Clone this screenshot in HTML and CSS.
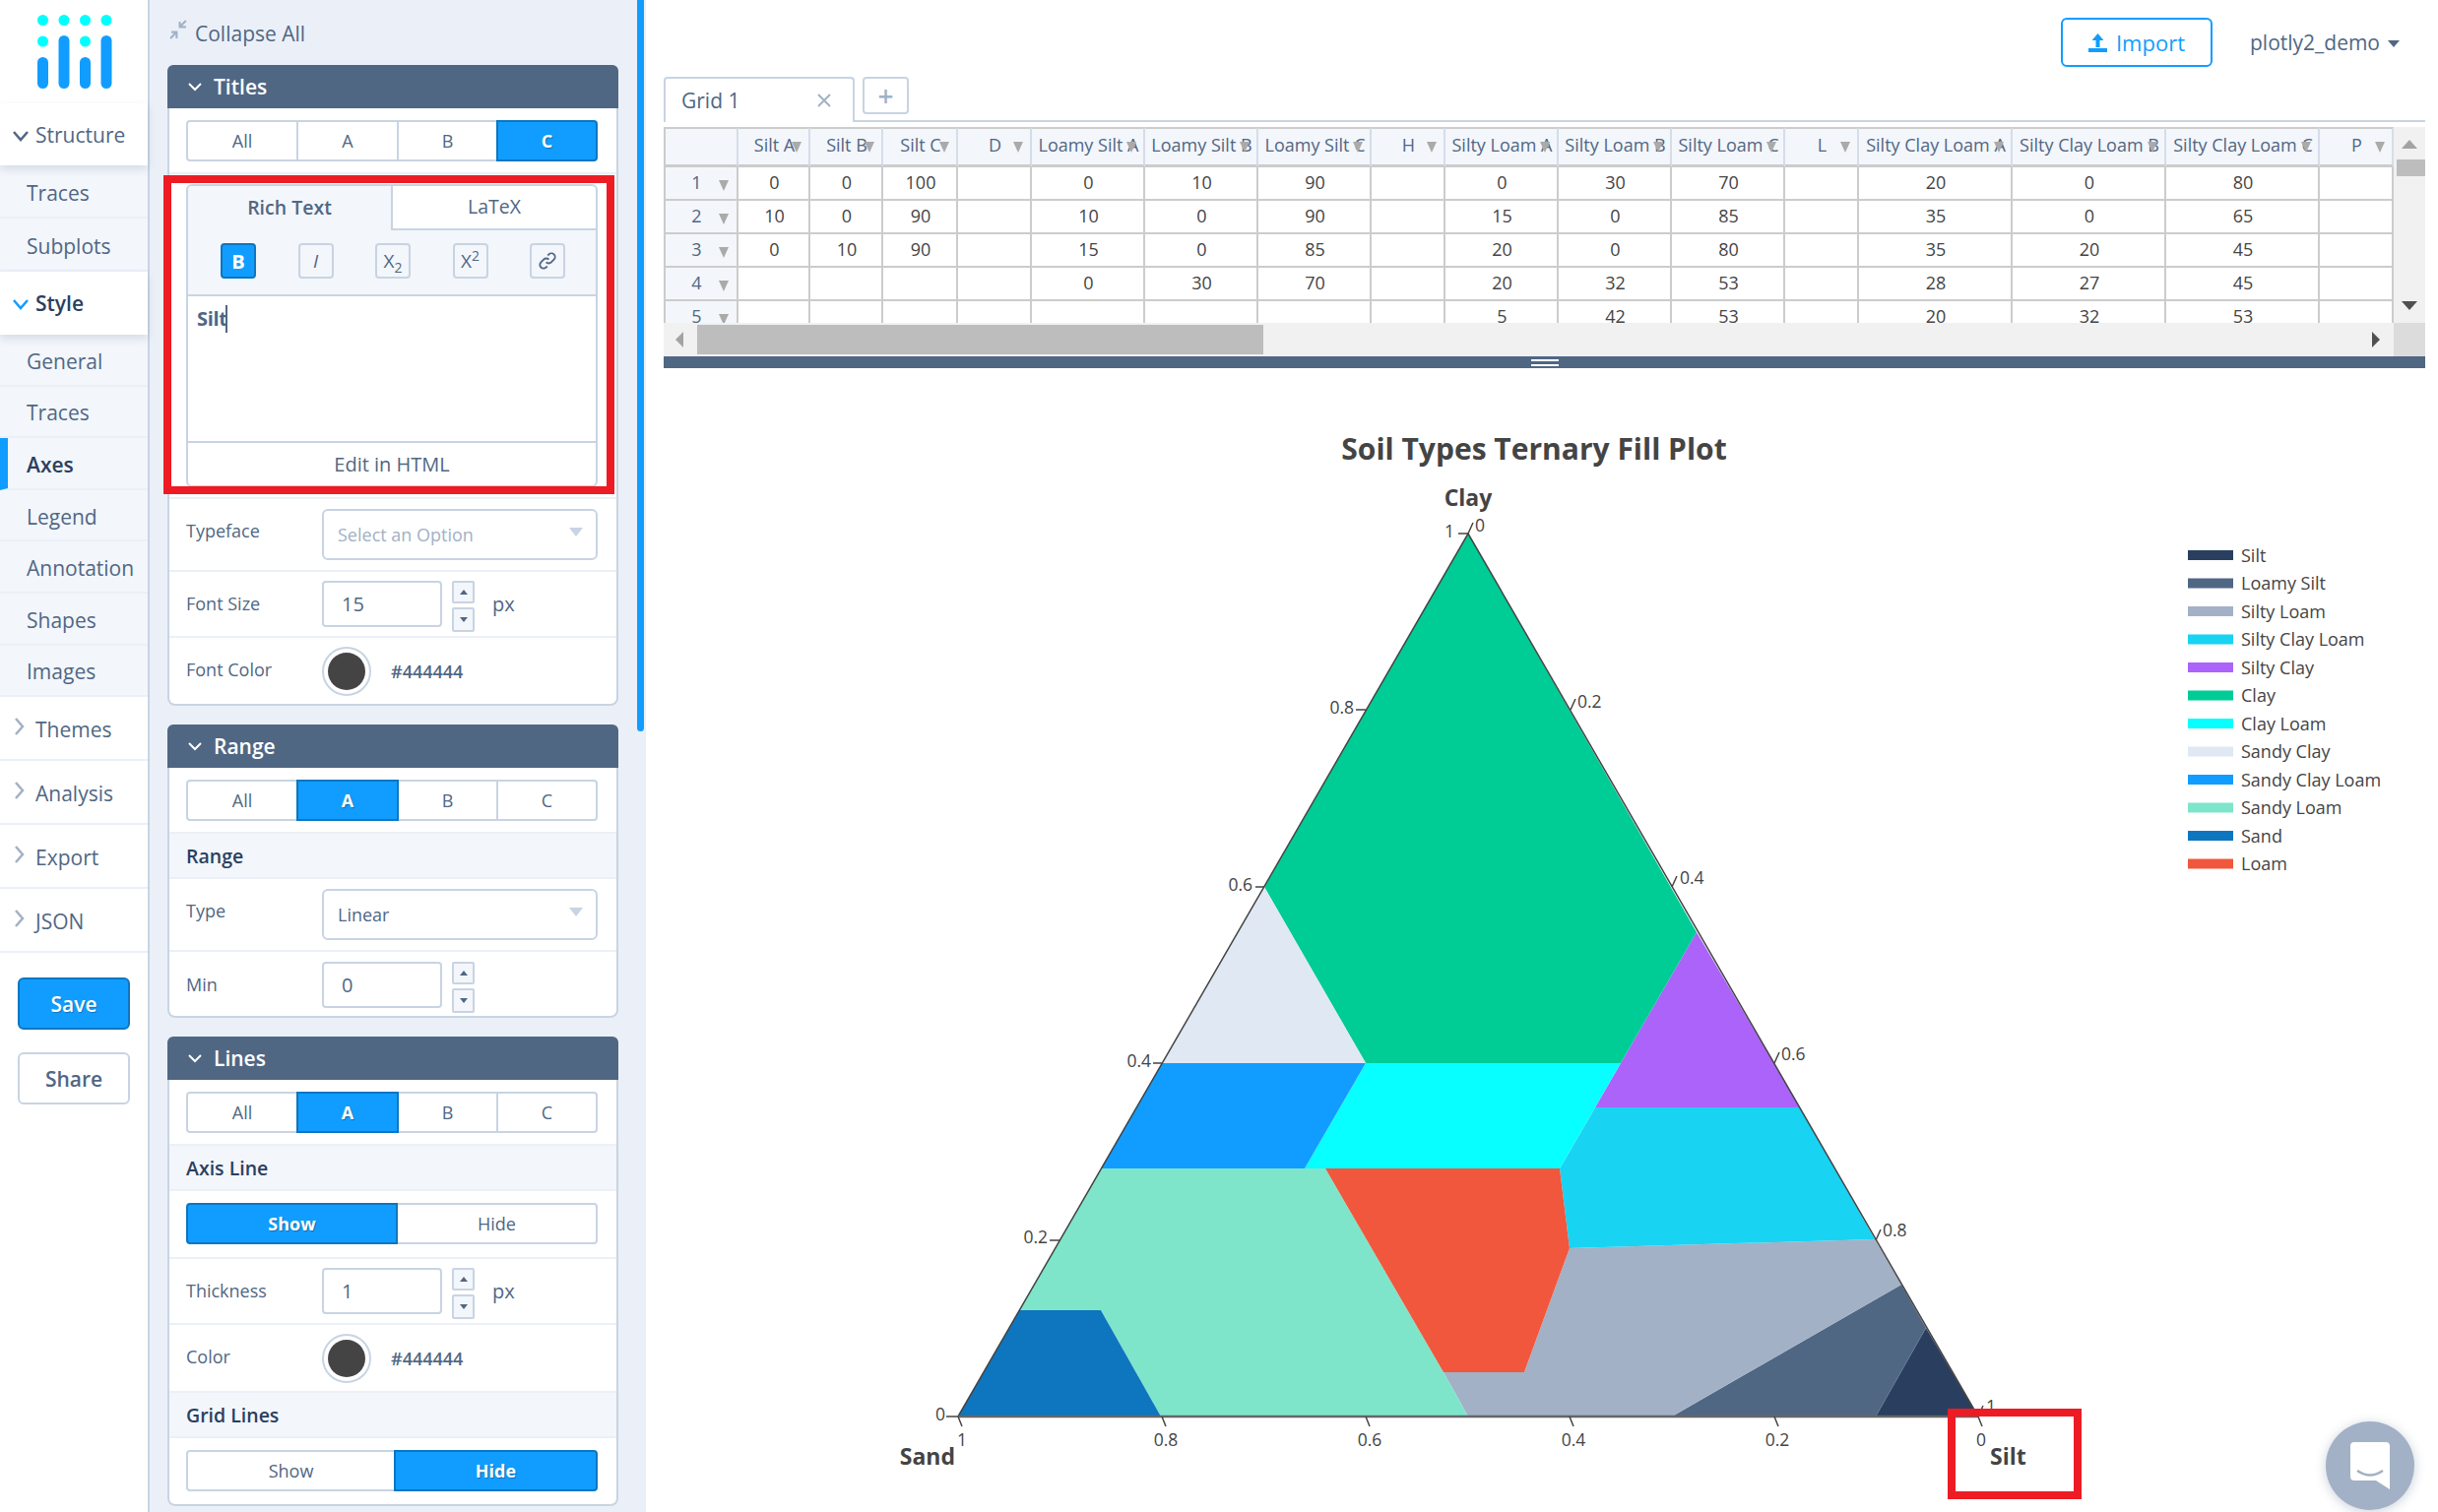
FILE: index.html
```html
<!DOCTYPE html>
<html lang="en">
<head>
<meta charset="utf-8">
<title>Soil Types Ternary Fill Plot</title>
<link rel="stylesheet" href="styles.css">
</head>
<body>
<div class="app">
  <nav class="nav">
    <div class="logo">
      <svg width="150" height="105" viewBox="0 0 150 105">
        <g fill="#0ff"><circle cx="43.5" cy="20.5" r="5.5"/><circle cx="65" cy="20.5" r="5.5"/><circle cx="86.5" cy="20.5" r="5.5"/><circle cx="108" cy="20.5" r="5.5"/><circle cx="43.5" cy="42" r="5.5"/><circle cx="86.5" cy="42" r="5.5"/></g>
        <g fill="#119dff"><rect x="38" y="58" width="11" height="32" rx="5.5"/><rect x="59.500" y="36" width="11" height="54" rx="5.5"/><rect x="81" y="58" width="11" height="32" rx="5.5"/><rect x="102.500" y="36" width="11" height="54" rx="5.5"/></g>
      </svg>
    </div>
    <div class="nav-top nav-open nav-structure"><svg class="chev" width="16" height="12" viewBox="0 0 16 12"><path d="M1 2l7 8 7-8"/></svg>Structure</div>
    <div class="nav-sub nav-sub-tall">Traces</div>
    <div class="nav-sub nav-sub-tall">Subplots</div>
    <div class="nav-top nav-open nav-style"><svg class="chev chev-blue" width="16" height="12" viewBox="0 0 16 12"><path d="M1 2l7 8 7-8"/></svg>Style</div>
    <div class="nav-sub">General</div>
    <div class="nav-sub">Traces</div>
    <div class="nav-sub nav-active">Axes</div>
    <div class="nav-sub">Legend</div>
    <div class="nav-sub">Annotation</div>
    <div class="nav-sub">Shapes</div>
    <div class="nav-sub">Images</div>
    <div class="nav-top"><svg class="chev-r" width="10" height="18" viewBox="0 0 10 18"><path d="M1 1l7 8-7 8"/></svg>Themes</div>
    <div class="nav-top"><svg class="chev-r" width="10" height="18" viewBox="0 0 10 18"><path d="M1 1l7 8-7 8"/></svg>Analysis</div>
    <div class="nav-top"><svg class="chev-r" width="10" height="18" viewBox="0 0 10 18"><path d="M1 1l7 8-7 8"/></svg>Export</div>
    <div class="nav-top"><svg class="chev-r" width="10" height="18" viewBox="0 0 10 18"><path d="M1 1l7 8-7 8"/></svg>JSON</div>
    <div class="nav-actions">
      <button class="btn-save">Save</button>
      <button class="btn-share">Share</button>
    </div>
  </nav>

  <aside class="panel">
    <div class="collapse">
      <svg width="19" height="21" viewBox="0 0 18 20"><path d="M16 1l-6 6M10 2v5h6M1 18l6-6M2 12h5v6"/></svg>
      <span>Collapse All</span>
    </div>

    <section class="card">
      <header class="card-head"><svg class="head-chev" width="14" height="10" viewBox="0 0 14 10"><path d="M1 2l6 6 6-6"/></svg>Titles</header>
      <div class="row-seg">
        <div class="seg-group"><div class="seg seg-all">All</div><div class="seg seg-a">A</div><div class="seg seg-b">B</div><div class="seg seg-c seg-on">C</div></div>
      </div>
      <div class="row-rich">
        <div class="rich">
          <div class="rich-tabs"><div class="rich-tab rich-tab-on">Rich Text</div><div class="rich-tab">LaTeX</div></div>
          <div class="rich-tools">
            <div class="tool tool-on">B</div>
            <div class="tool tool-i">I</div>
            <div class="tool"><span>X<sub>2</sub></span></div>
            <div class="tool"><span>X<sup>2</sup></span></div>
            <div class="tool"><svg width="22" height="22" viewBox="0 0 24 24"><path d="M10.500 13.500a4 4 0 0 0 5.700 0l3-3a4 4 0 0 0-5.700-5.700l-1.200 1.200M13.500 10.500a4 4 0 0 0-5.700 0l-3 3a4 4 0 0 0 5.700 5.700l1.200-1.200"/></svg></div>
          </div>
          <div class="rich-edit"><b>Silt</b><i class="caret"></i></div>
          <div class="rich-foot">Edit in HTML</div>
        </div>
      </div>
      <div class="row row-select"><label>Typeface</label><div class="select select-empty">Select an Option<i class="select-caret"></i></div></div>
      <div class="row row-num"><label>Font Size</label><div class="num">15</div><div class="spin"><div class="spin-b"><i class="tri-up"></i></div><div class="spin-b spin-low"><i class="tri-down"></i></div></div><span class="unit">px</span></div>
      <div class="row row-color row-last"><label>Font Color</label><div class="swatch"><i></i></div><span class="hex">#444444</span></div>
    </section>

    <section class="card">
      <header class="card-head"><svg class="head-chev" width="14" height="10" viewBox="0 0 14 10"><path d="M1 2l6 6 6-6"/></svg>Range</header>
      <div class="row-seg">
        <div class="seg-group"><div class="seg seg-all">All</div><div class="seg seg-a seg-on">A</div><div class="seg seg-b">B</div><div class="seg seg-c">C</div></div>
      </div>
      <div class="section">Range</div>
      <div class="row row-select"><label>Type</label><div class="select">Linear<i class="select-caret"></i></div></div>
      <div class="row row-num row-last row-min"><label>Min</label><div class="num">0</div><div class="spin"><div class="spin-b"><i class="tri-up"></i></div><div class="spin-b spin-low"><i class="tri-down"></i></div></div></div>
    </section>

    <section class="card">
      <header class="card-head"><svg class="head-chev" width="14" height="10" viewBox="0 0 14 10"><path d="M1 2l6 6 6-6"/></svg>Lines</header>
      <div class="row-seg">
        <div class="seg-group"><div class="seg seg-all">All</div><div class="seg seg-a seg-on">A</div><div class="seg seg-b">B</div><div class="seg seg-c">C</div></div>
      </div>
      <div class="section">Axis Line</div>
      <div class="row-toggle">
        <div class="seg-group"><div class="seg seg-show seg-on">Show</div><div class="seg seg-hide">Hide</div></div>
      </div>
      <div class="row row-num"><label>Thickness</label><div class="num">1</div><div class="spin"><div class="spin-b"><i class="tri-up"></i></div><div class="spin-b spin-low"><i class="tri-down"></i></div></div><span class="unit">px</span></div>
      <div class="row row-color"><label>Color</label><div class="swatch"><i></i></div><span class="hex">#444444</span></div>
      <div class="section">Grid Lines</div>
      <div class="row-toggle row-toggle-last">
        <div class="seg-group"><div class="seg seg-show2">Show</div><div class="seg seg-hide2 seg-on">Hide</div></div>
      </div>
    </section>
    <div class="panel-scroll"></div>
    <div class="highlight highlight-rich"></div>
  </aside>

  <main class="main">
    <div class="topbar">
      <button class="btn-import">
        <svg width="19" height="20" viewBox="0 0 19 20"><path d="M9.500 1l6 7h-4v7h-4V8h-4z"/><rect x="0" y="16" width="19" height="4"/></svg>
        Import
      </button>
      <div class="user">plotly2_demo<i class="user-caret"></i></div>
    </div>
    <div class="grid-tabs">
      <div class="grid-tab"><span>Grid 1</span><svg width="14" height="14" viewBox="0 0 14 14"><path d="M1 1l12 12M13 1L1 13"/></svg></div>
      <div class="grid-add">+</div>
    </div>
    <div class="grid-frame">
      <div class="grid-view">
        <table class="sheet">
          <colgroup><col class="w76"><col class="w73"><col class="w74"><col class="w76"><col class="w75"><col class="w115"><col class="w115"><col class="w115"><col class="w75"><col class="w115"><col class="w115"><col class="w115"><col class="w75"><col class="w156"><col class="w156"><col class="w156"><col class="w75"></colgroup>
          <thead><tr><th></th><th>Silt A</th><th>Silt B</th><th>Silt C</th><th>D</th><th>Loamy Silt A</th><th>Loamy Silt B</th><th>Loamy Silt C</th><th>H</th><th>Silty Loam A</th><th>Silty Loam B</th><th>Silty Loam C</th><th>L</th><th>Silty Clay Loam A</th><th>Silty Clay Loam B</th><th>Silty Clay Loam C</th><th>P</th></tr></thead>
          <tbody>
            <tr><th>1</th><td>0</td><td>0</td><td>100</td><td></td><td>0</td><td>10</td><td>90</td><td></td><td>0</td><td>30</td><td>70</td><td></td><td>20</td><td>0</td><td>80</td><td></td></tr>
            <tr><th>2</th><td>10</td><td>0</td><td>90</td><td></td><td>10</td><td>0</td><td>90</td><td></td><td>15</td><td>0</td><td>85</td><td></td><td>35</td><td>0</td><td>65</td><td></td></tr>
            <tr><th>3</th><td>0</td><td>10</td><td>90</td><td></td><td>15</td><td>0</td><td>85</td><td></td><td>20</td><td>0</td><td>80</td><td></td><td>35</td><td>20</td><td>45</td><td></td></tr>
            <tr><th>4</th><td></td><td></td><td></td><td></td><td>0</td><td>30</td><td>70</td><td></td><td>20</td><td>32</td><td>53</td><td></td><td>28</td><td>27</td><td>45</td><td></td></tr>
            <tr><th>5</th><td></td><td></td><td></td><td></td><td></td><td></td><td></td><td></td><td>5</td><td>42</td><td>53</td><td></td><td>20</td><td>32</td><td>53</td><td></td></tr>
          </tbody>
        </table>
      </div>
      <div class="vscroll"><i class="arrow-up"></i><div class="vthumb"></div><i class="arrow-down"></i></div>
      <div class="hscroll"><i class="arrow-left"></i><div class="hthumb"></div><i class="arrow-right"></i></div>
      <div class="corner"></div>
    </div>
    <div class="resize-bar"><i></i></div>
    <div class="plot">
      <svg class="plot-svg" width="1820" height="1162" viewBox="656 374 1820 1162">
        <text class="t-title" x="1558" y="467" text-anchor="middle">Soil Types Ternary Fill Plot</text>
        <text class="t-axis" x="1491" y="514" text-anchor="middle">Clay</text>
        <text class="t-axis" x="970" y="1488" text-anchor="end">Sand</text>
        <text class="t-axis" x="2021" y="1488">Silt</text>
        <polygon fill="#2a3f5f" points="2009,1439 1956,1349 1905,1439"/>
        <polygon fill="#506784" points="1905,1439 1956,1349 1931,1305 1698,1439"/>
        <polygon fill="#a2b1c6" points="1698,1439 1931,1305 1904,1259 1594,1268 1548,1394 1466,1394 1491,1439"/>
        <polygon fill="#19d3f3" points="1620,1125 1828,1125 1904,1259 1594,1268 1584,1187"/>
        <polygon fill="#ab63fa" points="1723,947 1646,1080 1620,1125 1828,1125"/>
        <polygon fill="#00cc96" points="1491,542 1284,901 1387,1080 1646,1080 1723,947"/>
        <polygon fill="#08ffff" points="1387,1080 1646,1080 1584,1187 1325,1187"/>
        <polygon fill="#dfe8f3" points="1284,901 1387,1080 1180,1080"/>
        <polygon fill="#119dff" points="1180,1080 1387,1080 1325,1187 1118,1187"/>
        <polygon fill="#7fe5ca" points="1118,1187 1346,1187 1466,1394 1491,1439 1179,1439 1118,1331 1035,1331"/>
        <polygon fill="#0d76bf" points="1035,1331 1118,1331 1179,1439 973,1439"/>
        <polygon fill="#f0573c" points="1346,1187 1584,1187 1594,1268 1548,1394 1466,1394"/>
        <path class="axis" d="M973 1439L1491 542L2009 1439"/>
        <path class="axis-base" d="M973 1439H2009"/>
        <path class="ticks" d="M961 1439h12M1077 1260h-11M1180 1080h-9M1284 901h-9M1481 542h10M1387 721h-10M1491 542l5-11M1595 721l5-11M1698 901l5-11M1802 1080l5-11M1905 1260l5-11M2009 1439l5-11M973 1439l4 10M1180 1439l4 10M1387 1439l4 10M1594 1439l4 10M1802 1439l4 10M2009 1439l4 10"/>
        <g class="t-tick">
          <text x="960" y="1443" text-anchor="end">0</text>
          <text x="1064" y="1263" text-anchor="end">0.2</text>
          <text x="1169" y="1084" text-anchor="end">0.4</text>
          <text x="1272" y="905" text-anchor="end">0.6</text>
          <text x="1375" y="725" text-anchor="end">0.8</text>
          <text x="1477" y="546" text-anchor="end">1</text>
          <text x="1498" y="540">0</text>
          <text x="1602" y="719">0.2</text>
          <text x="1706" y="898">0.4</text>
          <text x="1809" y="1077">0.6</text>
          <text x="1912" y="1256">0.8</text>
          <text x="2017" y="1435">1</text>
          <text x="977" y="1469" text-anchor="middle">1</text>
          <text x="1184" y="1469" text-anchor="middle">0.8</text>
          <text x="1391" y="1469" text-anchor="middle">0.6</text>
          <text x="1598" y="1469" text-anchor="middle">0.4</text>
          <text x="1805" y="1469" text-anchor="middle">0.2</text>
          <text x="2012" y="1469" text-anchor="middle">0</text>
        </g>
        <g class="t-legend">
          <rect fill="#2a3f5f" x="2222" y="559" width="46" height="10"/><text x="2276" y="571">Silt</text>
          <rect fill="#506784" x="2222" y="587.500" width="46" height="10"/><text x="2276" y="599">Loamy Silt</text>
          <rect fill="#a2b1c6" x="2222" y="616" width="46" height="10"/><text x="2276" y="628">Silty Loam</text>
          <rect fill="#19d3f3" x="2222" y="644.500" width="46" height="10"/><text x="2276" y="656">Silty Clay Loam</text>
          <rect fill="#ab63fa" x="2222" y="673" width="46" height="10"/><text x="2276" y="685">Silty Clay</text>
          <rect fill="#00cc96" x="2222" y="701.500" width="46" height="10"/><text x="2276" y="713">Clay</text>
          <rect fill="#08ffff" x="2222" y="730" width="46" height="10"/><text x="2276" y="742">Clay Loam</text>
          <rect fill="#dfe8f3" x="2222" y="758.500" width="46" height="10"/><text x="2276" y="770">Sandy Clay</text>
          <rect fill="#119dff" x="2222" y="787" width="46" height="10"/><text x="2276" y="799">Sandy Clay Loam</text>
          <rect fill="#7fe5ca" x="2222" y="815.500" width="46" height="10"/><text x="2276" y="827">Sandy Loam</text>
          <rect fill="#0d76bf" x="2222" y="844" width="46" height="10"/><text x="2276" y="856">Sand</text>
          <rect fill="#f0573c" x="2222" y="872.500" width="46" height="10"/><text x="2276" y="884">Loam</text>
        </g>
        <rect class="mark" x="1982" y="1435" width="128" height="84"/>
      </svg>
    </div>
    <div class="chat">
      <svg width="42" height="50" viewBox="0 0 42 50"><path d="M5 1h32a4 4 0 0 1 4 4v44l-14-9H5a4 4 0 0 1-4-4V5a4 4 0 0 1 4-4z" fill="#fff"/><path d="M8 30q13 9 26 0" fill="none" stroke="#a2b1c6" stroke-width="2.500"/></svg>
    </div>
  </main>
</div>
</body>
</html>
```

FILE: styles.css
```css
* { box-sizing: border-box; }
html, body { margin: 0; height: 100%; overflow: hidden; }
body { font-family: "Open Sans", "Noto Sans", sans-serif; color: #506784; background: #fff; }
.app { display: flex; width: 2476px; height: 1536px; }

/* left navigation */
.nav { width: 152px; flex: none; background: #fff; border-right: 2px solid #c8d4e3; }
.logo { height: 105px; }
.logo svg { display: block; }
.nav-top { height: 65px; display: flex; align-items: center; padding: 2px 0 0 36px; font-size: 21px; border-bottom: 2px solid #ebf0f8; position: relative; }
.nav-open { background: #fff; box-shadow: 0 4px 8px rgba(80,103,132,.18); z-index: 1; border-bottom: 0; padding-top: 0; }
.nav-structure { height: 63px; }
.nav-style { height: 64px; color: #2a3f5f; font-weight: 600; }
.chev { position: absolute; left: 13px; top: 50%; margin-top: -5px; fill: none; stroke: #506784; stroke-width: 2.500; }
.chev-blue { stroke: #119dff; }
.chev-r { position: absolute; left: 15px; top: 50%; margin-top: -11px; fill: none; stroke: #a2b1c6; stroke-width: 2.500; }
.nav-sub { height: 52.600px; display: flex; align-items: center; padding: 3px 0 0 27px; font-size: 21px; background: #f3f6fb; border-bottom: 2px solid #ebf0f8; }
.nav-sub-tall { height: 54px; }
.nav-active { color: #2a3f5f; font-weight: 600; border-left: 8px solid #119dff; padding-left: 19px; }
.nav-actions { padding: 25px 18px 0 18px; display: flex; flex-direction: column; gap: 23px; }
.btn-save, .btn-share { font-family: inherit; font-size: 21px; font-weight: 600; height: 53px; border-radius: 6px; padding: 0; }
.btn-save { background: #119dff; color: #fff; border: 2px solid #0d76bf; text-shadow: 1px 1px 1px rgba(0,0,0,.25); }
.btn-share { background: #fff; color: #506784; border: 2px solid #c8d4e3; }

/* controls panel */
.panel { width: 504px; flex: none; height: 1536px; background: #ebf0f8; padding: 0 28px 0 18px; position: relative; overflow: hidden; }
.collapse { height: 66px; display: flex; align-items: center; font-size: 21px; padding: 2px 0 0 2px; gap: 7px; }
.collapse svg { fill: none; stroke: #a2b1c6; stroke-width: 2; margin-top: -8px; }
.card { background: #fff; border: 2px solid #c8d4e3; border-top: 0; border-radius: 8px; margin-bottom: 19px; }
.card-head { height: 44px; margin: 0 -2px; background: #506784; color: #fff; font-size: 21px; font-weight: 600; display: flex; align-items: center; padding-left: 21px; gap: 12px; border-radius: 6px 6px 0 0; }
.head-chev { fill: none; stroke: #fff; stroke-width: 2; }
.row-seg { height: 67px; padding: 12px 19px 0 17px; border-bottom: 2px solid #ebf0f8; }
.row-toggle { height: 69px; padding: 12px 19px 0 17px; border-bottom: 2px solid #ebf0f8; }
.row-toggle-last { height: 67px; padding-top: 12px; border-bottom: 0; }
.seg-group { display: flex; height: 42px; }
.seg { height: 42px; display: flex; align-items: center; justify-content: center; font-size: 18px; border: 2px solid #c8d4e3; margin-left: -2px; background: #fff; }
.seg:first-child { margin-left: 0; border-radius: 4px 0 0 4px; }
.seg:last-child { border-radius: 0 4px 4px 0; }
.seg-on { background: #119dff; border-color: #0d76bf; color: #fff; font-weight: 700; text-shadow: 1px 1px 1px rgba(0,0,0,.3); position: relative; z-index: 1; }
.seg-all { width: 114px; }
.seg-a { width: 104px; }
.seg-b { width: 103px; }
.seg-c { width: 103px; }
.seg-show { width: 216px; }
.seg-hide { width: 206px; }
.seg-show2 { width: 213px; }
.seg-hide2 { width: 207px; }
.row-rich { height: 330px; padding: 10px 19px 0 17px; border-bottom: 2px solid #ebf0f8; }
.rich { height: 308px; border: 2px solid #c8d4e3; border-radius: 6px; display: flex; flex-direction: column; overflow: hidden; }
.rich-tabs { display: flex; height: 45px; flex: none; }
.rich-tab { flex: 1; display: flex; align-items: center; justify-content: center; font-size: 19.500px; padding-bottom: 3px; border-bottom: 2px solid #c8d4e3; }
.rich-tab-on { background: #f3f6fb; font-weight: 600; border-bottom: 0; border-right: 2px solid #c8d4e3; }
.rich-tools { height: 67px; flex: none; background: #f3f6fb; border-bottom: 2px solid #c8d4e3; display: flex; align-items: center; justify-content: space-between; padding: 0 31px 3px 33px; }
.tool { width: 36px; height: 36px; border: 2px solid #c8d4e3; border-radius: 4px; display: flex; align-items: center; justify-content: center; font-size: 19px; }
.tool sub, .tool sup { font-size: 14px; line-height: 0; }
.tool svg { fill: none; stroke: #506784; stroke-width: 2; }
.tool-on { background: #119dff; border-color: #0d76bf; color: #fff; font-weight: 700; font-size: 20px; }
.tool-i { font-style: italic; }
.rich-edit { flex: 1; padding: 9px 9px 0 9px; font-size: 20px; display: flex; align-items: flex-start; line-height: 28px; }
.rich-edit b { font-weight: 700; letter-spacing: -.3px; }
.caret { width: 2px; height: 28px; background: #506784; margin-left: -2px; }
.rich-foot { height: 45px; flex: none; border-top: 2px solid #c8d4e3; display: flex; align-items: center; justify-content: center; font-size: 20px; }

.row { display: flex; align-items: flex-start; padding: 9px 19px 0 17px; border-bottom: 2px solid #ebf0f8; }
.row label { width: 138px; flex: none; font-size: 18px; }
.row-last { border-bottom: 0; }
.row-select { height: 74px; padding-top: 10px; }
.row-select label { line-height: 45px; }
.row-num { height: 67px; }
.row-num label { line-height: 47px; }
.row-min { height: 65px; padding-top: 10px; }
.row-color { height: 69px; }
.row-color.row-last { height: 67px; }
.row-color label { line-height: 46px; }
.select { flex: 1; height: 52px; border: 2px solid #c8d4e3; border-radius: 6px; display: flex; align-items: center; padding-left: 14px; font-size: 18px; position: relative; }
.select-empty { color: #a2b1c6; }
.select-caret { position: absolute; right: 13px; top: 17px; border-left: 7px solid transparent; border-right: 7px solid transparent; border-top: 9px solid #c8d4e3; }
.num { width: 122px; flex: none; height: 47px; border: 2px solid #c8d4e3; border-radius: 4px; display: flex; align-items: center; padding-left: 18px; font-size: 20px; }
.spin { width: 23px; margin-left: 10px; flex: none; display: flex; flex-direction: column; gap: 4px; }
.spin-b { height: 23px; background: #f3f6fb; border: 2px solid #c8d4e3; border-radius: 2px; display: flex; align-items: center; justify-content: center; }
.spin-low { height: 25px; }
.tri-up { border-left: 4px solid transparent; border-right: 4px solid transparent; border-bottom: 5px solid #506784; }
.tri-down { border-left: 4px solid transparent; border-right: 4px solid transparent; border-top: 5px solid #506784; }
.unit { margin-left: 18px; font-size: 20px; line-height: 47px; }
.swatch { width: 50px; height: 50px; flex: none; border: 2px solid #c8d4e3; border-radius: 50%; padding: 4px; background: #fff; }
.swatch i { display: block; width: 38px; height: 38px; border-radius: 50%; background: #444; }
.hex { margin-left: 20px; font-size: 18px; font-weight: 600; line-height: 50px; }
.section { height: 46px; background: #f3f6fb; border-bottom: 2px solid #ebf0f8; padding-left: 17px; font-size: 19.500px; font-weight: 600; color: #2a3f5f; display: flex; align-items: center; }
.panel-scroll { position: absolute; left: 495px; top: 0; width: 7px; height: 743px; background: #119dff; border-radius: 0 0 4px 4px; }
.highlight { position: absolute; border: 8px solid #ed1c24; pointer-events: none; }
.highlight-rich { left: 14px; top: 178px; width: 458px; height: 324px; }

/* main column */
.main { flex: 1; min-width: 0; position: relative; display: flex; flex-direction: column; }
.topbar { height: 78px; flex: none; display: flex; justify-content: flex-end; align-items: flex-start; padding: 18px 39px 0 0; gap: 38px; }
.btn-import { width: 154px; height: 50px; background: #fff; border: 2px solid #119dff; border-radius: 6px; color: #119dff; font-family: inherit; font-size: 22px; display: flex; align-items: center; justify-content: center; gap: 9px; padding: 0; }
.btn-import svg { fill: #119dff; }
.user { height: 50px; display: flex; align-items: center; font-size: 21px; gap: 8px; color: #506784; }
.user-caret { border-left: 6px solid transparent; border-right: 6px solid transparent; border-top: 7px solid #506784; margin-top: 2px; }

.grid-tabs { height: 46px; flex: none; margin: 0 13px 0 18px; border-bottom: 2px solid #c8d4e3; display: flex; align-items: flex-start; }
.grid-tab { width: 194px; height: 46px; border: 2px solid #c8d4e3; border-bottom: 0; border-radius: 4px 4px 0 0; background: #fff; display: flex; align-items: center; justify-content: space-between; padding: 0 22px 0 16px; font-size: 21px; }
.grid-tab svg { fill: none; stroke: #a2b1c6; stroke-width: 2; }
.grid-add { width: 47px; height: 38px; margin-left: 8px; border: 2px solid #c8d4e3; border-radius: 4px; display: flex; align-items: center; justify-content: center; font-size: 28px; font-weight: 600; color: #a2b1c6; line-height: 1; }

.grid-frame { height: 238px; flex: none; margin: 0 13px 0 18px; padding-top: 5px; display: grid; grid-template-columns: 1757px 32px; grid-template-rows: 199px 34px; }
.grid-view { overflow: hidden; background: #fff; }
.sheet { border-collapse: separate; border-spacing: 0; table-layout: fixed; width: 1757px; font-size: 18px; }
.w73 { width: 73px; } .w74 { width: 74px; } .w75 { width: 75px; } .w76 { width: 76px; } .w115 { width: 115px; } .w156 { width: 156px; }
.sheet th, .sheet td { padding: 0 0 3px 2px; height: 34px; text-align: center; font-weight: 400; border-right: 2px solid #ccc; border-bottom: 2px solid #ccc; overflow: hidden; white-space: nowrap; position: relative; }
.sheet td { color: #444; }
.sheet th { background: #f3f6fb; color: #506784; }
.sheet thead th { height: 41px; padding-bottom: 4px; border-top: 2px solid #ccc; border-right-color: #d5dde9; border-bottom-width: 3px; font-size: 18px; }
.sheet th:first-child { border-left: 2px solid #ccc; }
.sheet th::after { content: ""; position: absolute; right: 7px; top: 13px; border-left: 5px solid transparent; border-right: 5px solid transparent; border-top: 11px solid #aaa; }
.sheet thead th:first-child::after { display: none; }
.sheet tbody th { padding-right: 11px; font-size: 18px; }
.sheet tbody th::after { right: 8px; top: 13px; }
.vscroll { background: #f1f1f1; display: flex; flex-direction: column; align-items: center; position: relative; }
.arrow-up { margin-top: 13px; border-left: 8px solid transparent; border-right: 8px solid transparent; border-bottom: 9px solid #a3a3a3; }
.arrow-down { position: absolute; bottom: 13px; left: 8px; border-left: 8px solid transparent; border-right: 8px solid transparent; border-top: 9px solid #505050; }
.vthumb { width: 29px; height: 17px; margin: 11px 0 0 3px; background: #bdbdbd; }
.hscroll { background: #f1f1f1; display: flex; align-items: center; padding-left: 12px; padding-right: 14px; }
.arrow-left { border-top: 8px solid transparent; border-bottom: 8px solid transparent; border-right: 8px solid #a3a3a3; }
.hthumb { width: 575px; height: 30px; margin-left: 14px; background: #bdbdbd; }
.arrow-right { margin-left: auto; border-top: 8px solid transparent; border-bottom: 8px solid transparent; border-left: 8px solid #505050; }
.corner { background: #dcdcdc; }
.resize-bar { height: 12px; flex: none; margin: 0 13px 0 18px; background: #506784; display: flex; justify-content: center; }
.resize-bar i { display: block; width: 28px; height: 7px; margin-top: 3px; border-top: 2px solid #fff; border-bottom: 2px solid #fff; }

.plot { flex: 1; min-height: 0; }
.plot-svg { display: block; }
.axis { fill: none; stroke: #444; stroke-width: 1.500; }
.axis-base { fill: none; stroke: #666; stroke-width: 2.500; }
.ticks { fill: none; stroke: #444; stroke-width: 1.500; }
.t-title { font-size: 30px; font-weight: 700; fill: #444; }
.t-axis { font-size: 23px; font-weight: 700; fill: #444; }
.t-tick text { font-size: 17.500px; fill: #444; }
.t-legend text { font-size: 18px; fill: #444; }
.mark { fill: none; stroke: #ed1c24; stroke-width: 8; }
.chat { position: absolute; left: 1706px; top: 1444px; width: 90px; height: 90px; border-radius: 50%; background: #a2b1c6; box-shadow: 0 2px 12px rgba(80,103,132,.3); display: flex; align-items: center; justify-content: center; }
```
